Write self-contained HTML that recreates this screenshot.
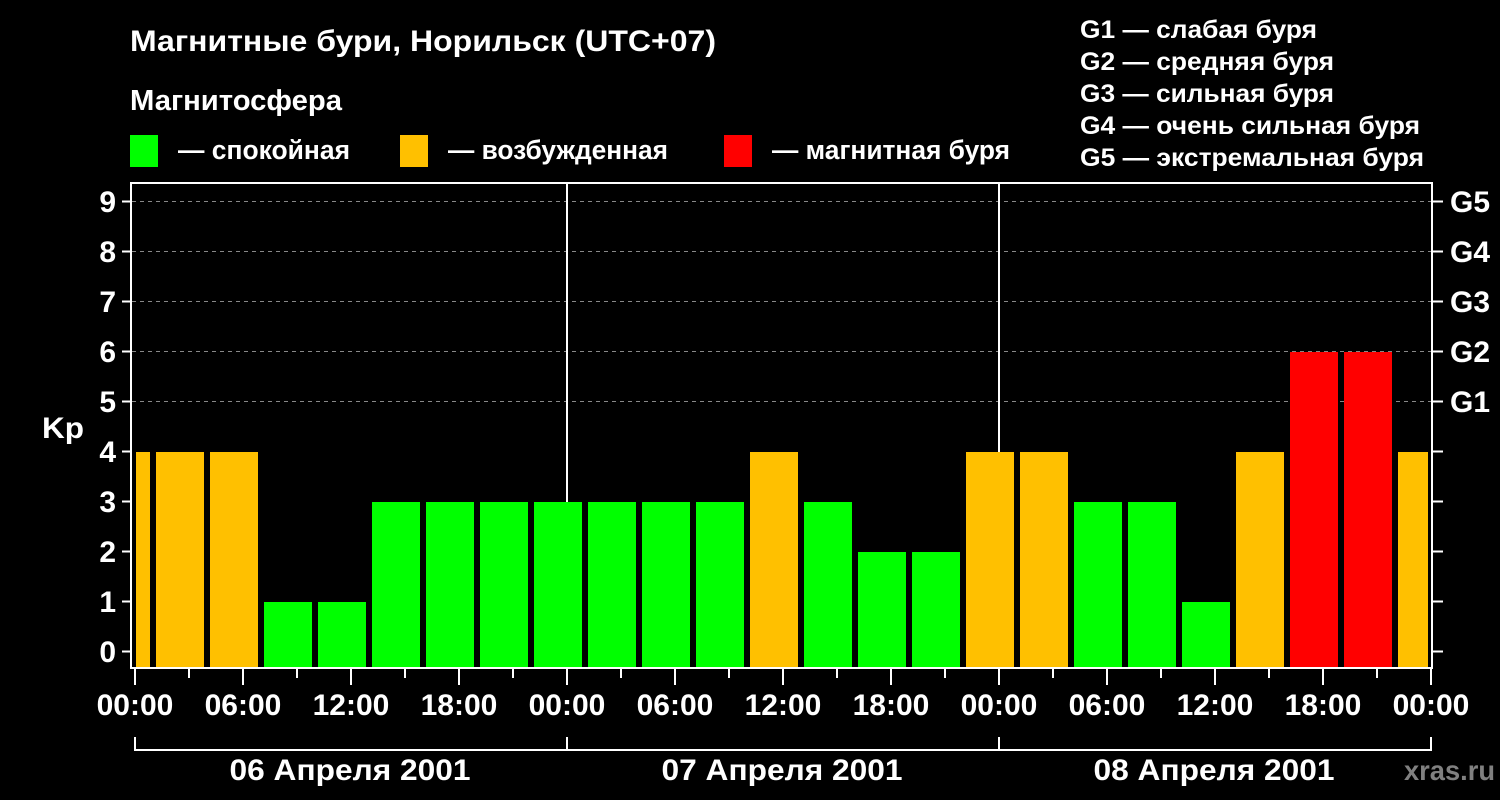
<!DOCTYPE html>
<html><head><meta charset="utf-8"><style>
html,body{margin:0;padding:0;background:#000;}
svg{display:block;font-family:"Liberation Sans",Arial,sans-serif;font-weight:bold;}
</style></head><body>
<svg width="1500" height="800" viewBox="0 0 1500 800" xmlns="http://www.w3.org/2000/svg">
<rect width="1500" height="800" fill="#000"/>
<g fill="#fff">
<text x="130" y="51" font-size="30" textLength="586" lengthAdjust="spacingAndGlyphs">Магнитные бури, Норильск (UTC+07)</text>
<text x="130" y="110" font-size="29" textLength="212" lengthAdjust="spacingAndGlyphs">Магнитосфера</text>
<text x="178" y="159" font-size="27" textLength="172" lengthAdjust="spacingAndGlyphs">— спокойная</text>
<text x="448" y="159" font-size="27" textLength="220" lengthAdjust="spacingAndGlyphs">— возбужденная</text>
<text x="772" y="159" font-size="27" textLength="238" lengthAdjust="spacingAndGlyphs">— магнитная буря</text>
<g font-size="25">
<text x="1080" y="38" textLength="237" lengthAdjust="spacingAndGlyphs">G1 — слабая буря</text>
<text x="1080" y="70" textLength="254" lengthAdjust="spacingAndGlyphs">G2 — средняя буря</text>
<text x="1080" y="102" textLength="254" lengthAdjust="spacingAndGlyphs">G3 — сильная буря</text>
<text x="1080" y="134" textLength="340" lengthAdjust="spacingAndGlyphs">G4 — очень сильная буря</text>
<text x="1080" y="166" textLength="344" lengthAdjust="spacingAndGlyphs">G5 — экстремальная буря</text>
</g>
</g>
<rect x="130" y="135" width="28" height="32" fill="#00ff00"/>
<rect x="400" y="135" width="28" height="32" fill="#ffc000"/>
<rect x="724" y="135" width="28" height="32" fill="#ff0000"/>

<g stroke="#888" stroke-width="1" stroke-dasharray="4,4">
<line x1="132" y1="201.5" x2="1432" y2="201.5"/>
<line x1="132" y1="251.5" x2="1432" y2="251.5"/>
<line x1="132" y1="301.5" x2="1432" y2="301.5"/>
<line x1="132" y1="351.5" x2="1432" y2="351.5"/>
<line x1="132" y1="401.5" x2="1432" y2="401.5"/>
</g>
<g stroke="#fff" stroke-width="2">
<line x1="567" y1="183" x2="567" y2="668"/>
<line x1="999" y1="183" x2="999" y2="668"/>
</g>

<rect x="136" y="452" width="14" height="216" fill="#ffc000"/>
<rect x="156" y="452" width="48" height="216" fill="#ffc000"/>
<rect x="210" y="452" width="48" height="216" fill="#ffc000"/>
<rect x="264" y="602" width="48" height="66" fill="#00ff00"/>
<rect x="318" y="602" width="48" height="66" fill="#00ff00"/>
<rect x="372" y="502" width="48" height="166" fill="#00ff00"/>
<rect x="426" y="502" width="48" height="166" fill="#00ff00"/>
<rect x="480" y="502" width="48" height="166" fill="#00ff00"/>
<rect x="534" y="502" width="48" height="166" fill="#00ff00"/>
<rect x="588" y="502" width="48" height="166" fill="#00ff00"/>
<rect x="642" y="502" width="48" height="166" fill="#00ff00"/>
<rect x="696" y="502" width="48" height="166" fill="#00ff00"/>
<rect x="750" y="452" width="48" height="216" fill="#ffc000"/>
<rect x="804" y="502" width="48" height="166" fill="#00ff00"/>
<rect x="858" y="552" width="48" height="116" fill="#00ff00"/>
<rect x="912" y="552" width="48" height="116" fill="#00ff00"/>
<rect x="966" y="452" width="48" height="216" fill="#ffc000"/>
<rect x="1020" y="452" width="48" height="216" fill="#ffc000"/>
<rect x="1074" y="502" width="48" height="166" fill="#00ff00"/>
<rect x="1128" y="502" width="48" height="166" fill="#00ff00"/>
<rect x="1182" y="602" width="48" height="66" fill="#00ff00"/>
<rect x="1236" y="452" width="48" height="216" fill="#ffc000"/>
<rect x="1290" y="352" width="48" height="316" fill="#ff0000"/>
<rect x="1344" y="352" width="48" height="316" fill="#ff0000"/>
<rect x="1398" y="452" width="30" height="216" fill="#ffc000"/>

<rect x="131" y="183" width="1301" height="485" fill="none" stroke="#fff" stroke-width="2"/>
<g stroke="#fff" stroke-width="2">
<path d="M122 201.5h9M122 251.5h9M122 301.5h9M122 351.5h9M122 401.5h9M122 451.5h9M122 501.5h9M122 551.5h9M122 601.5h9M122 651.5h9"/>
<path d="M1432 201.5h11M1432 251.5h11M1432 301.5h11M1432 351.5h11M1432 401.5h11M1432 451.5h11M1432 501.5h11M1432 551.5h11M1432 601.5h11M1432 651.5h11"/>
<path d="M135 668v17M189 668v10M243 668v17M297 668v10M351 668v17M405 668v10M459 668v17M513 668v10M567 668v17M621 668v10M675 668v17M729 668v10M783 668v17M837 668v10M891 668v17M945 668v10M999 668v17M1053 668v10M1107 668v17M1161 668v10M1215 668v17M1269 668v10M1323 668v17M1377 668v10M1431 668v17"/>
<path d="M135 737v13H1431V737M567 737v13M999 737v13"/>
</g>

<g fill="#fff" font-size="30" text-anchor="end">
<text x="116" y="212">9</text><text x="116" y="262">8</text><text x="116" y="312">7</text>
<text x="116" y="362">6</text><text x="116" y="412">5</text><text x="116" y="462">4</text>
<text x="116" y="512">3</text><text x="116" y="562">2</text><text x="116" y="612">1</text>
<text x="116" y="662">0</text>
</g>
<text x="42" y="438" fill="#fff" font-size="30" textLength="42" lengthAdjust="spacingAndGlyphs">Kp</text>
<g fill="#fff" font-size="30">
<text x="1450" y="212">G5</text><text x="1450" y="262">G4</text><text x="1450" y="312">G3</text>
<text x="1450" y="362">G2</text><text x="1450" y="412">G1</text>
</g>
<g fill="#fff" font-size="30" text-anchor="middle">
<text x="135" y="715">00:00</text><text x="243" y="715">06:00</text><text x="351" y="715">12:00</text>
<text x="459" y="715">18:00</text><text x="567" y="715">00:00</text><text x="675" y="715">06:00</text>
<text x="783" y="715">12:00</text><text x="891" y="715">18:00</text><text x="999" y="715">00:00</text>
<text x="1107" y="715">06:00</text><text x="1215" y="715">12:00</text><text x="1323" y="715">18:00</text>
<text x="1431" y="715">00:00</text>
<text x="350" y="780" textLength="241" lengthAdjust="spacingAndGlyphs">06 Апреля 2001</text>
<text x="782" y="780" textLength="241" lengthAdjust="spacingAndGlyphs">07 Апреля 2001</text>
<text x="1214" y="780" textLength="241" lengthAdjust="spacingAndGlyphs">08 Апреля 2001</text>
</g>
<text x="1404" y="780" fill="#808080" font-size="28" textLength="91" lengthAdjust="spacingAndGlyphs">xras.ru</text>
</svg>
</body></html>
